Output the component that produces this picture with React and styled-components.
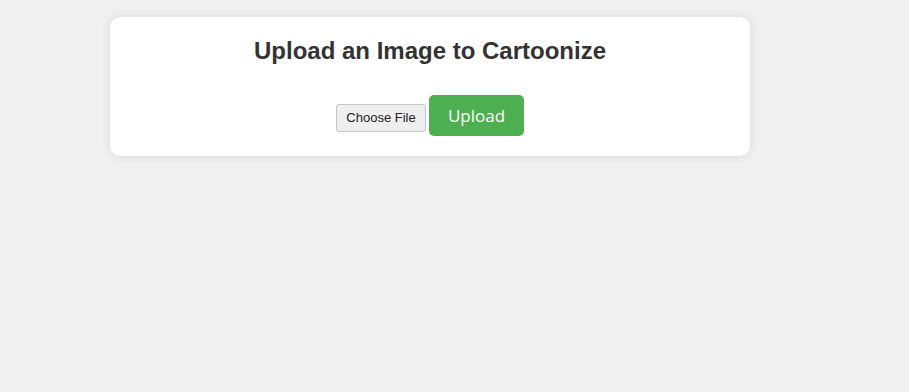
import React from 'react';
import styled, { createGlobalStyle } from 'styled-components';

const GlobalStyle = createGlobalStyle`
  html, body {
    margin: 0;
    padding: 0;
    background: #f0f0f0;
    font-family: 'Liberation Sans', Arial, sans-serif;
  }
`;

const Page = styled.div`
  min-height: 392px;
  padding: 17px 0 0 110px;
  box-sizing: border-box;
`;

const Card = styled.div`
  width: 600px;
  padding: 20px;
  background: #fff;
  border-radius: 10px;
  box-shadow: 0 0 10px rgba(0, 0, 0, 0.1);
  text-align: center;
`;

const Title = styled.h2`
  margin: 0 0 30px;
  font-size: 24px;
  line-height: 28px;
  font-weight: bold;
  color: #333;
`;

const UploadForm = styled.form`
  display: flex;
  justify-content: center;
  align-items: flex-start;
  gap: 3px;
`;

const FileButton = styled.label`
  display: inline-block;
  box-sizing: border-box;
  width: 90px;
  height: 28px;
  margin-top: 9px;
  line-height: 26px;
  font-size: 13px;
  color: #222;
  background: #efefef;
  border: 1px solid #c4c4c4;
  border-radius: 3px;
  cursor: pointer;

  input {
    display: none;
  }
`;

const SubmitButton = styled.button`
  box-sizing: border-box;
  width: 95px;
  height: 41px;
  padding: 0;
  font-family: 'Open Sans', 'Noto Sans', sans-serif;
  font-size: 17px;
  color: #fff;
  background: #4caf50;
  border: none;
  border-radius: 5px;
  cursor: pointer;
`;

export default function App() {
  return (
    <>
      <GlobalStyle />
      <Page>
        <Card>
          <Title>Upload an Image to Cartoonize</Title>
          <UploadForm onSubmit={e => e.preventDefault()}>
            <FileButton>
              Choose File
              <input type="file" accept="image/*" />
            </FileButton>
            <SubmitButton type="submit">Upload</SubmitButton>
          </UploadForm>
        </Card>
      </Page>
    </>
  );
}
